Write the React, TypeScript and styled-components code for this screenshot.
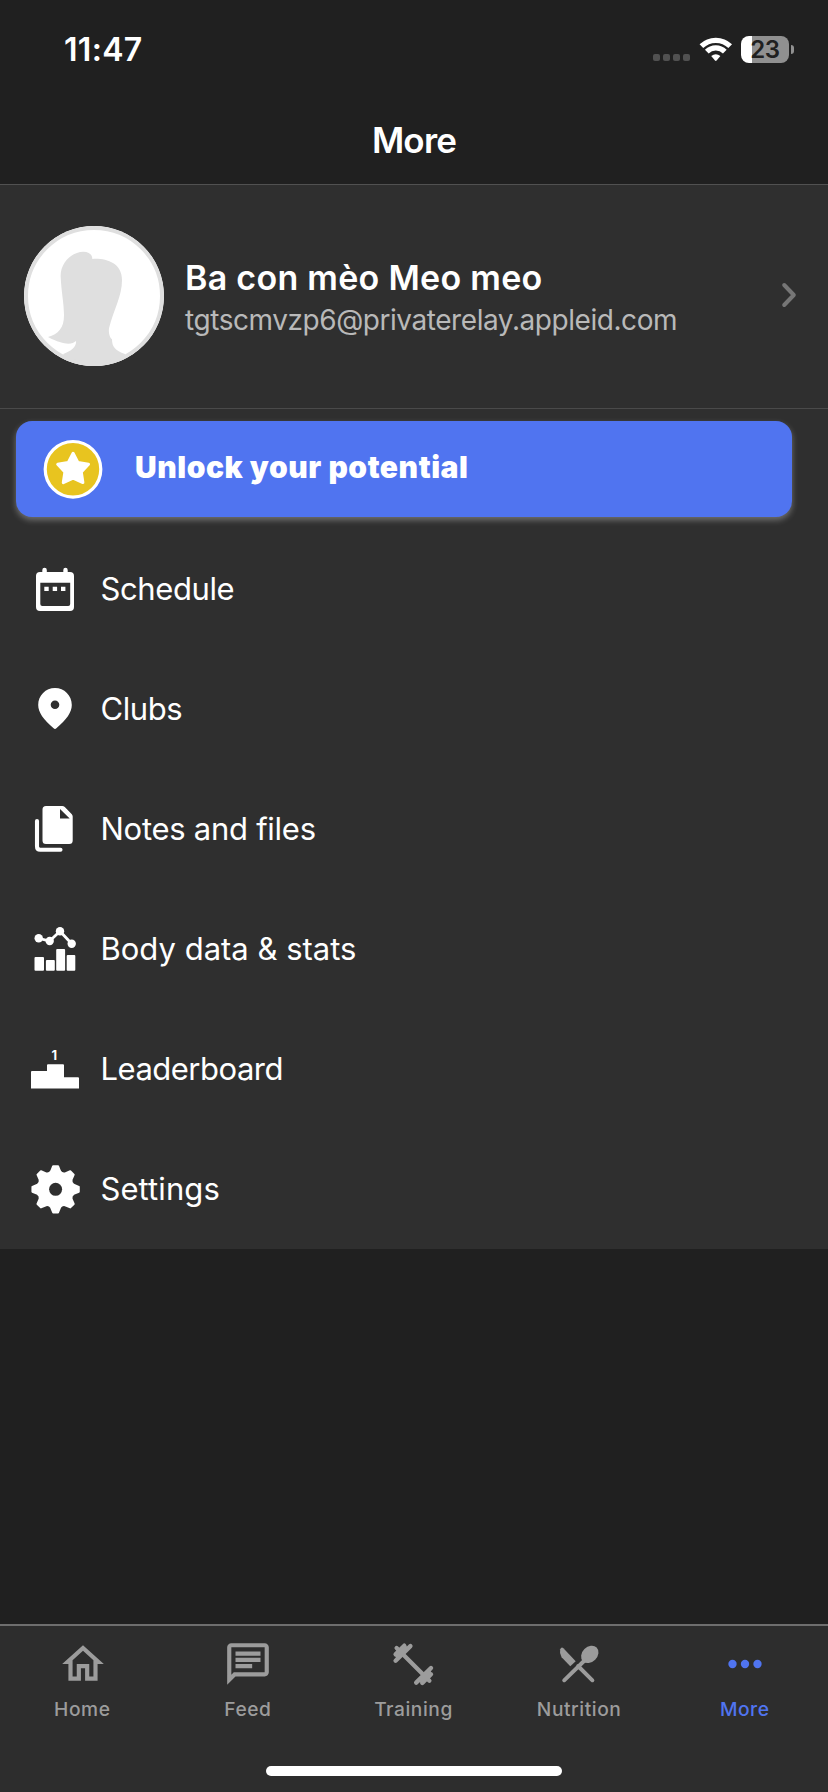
import React from "react";
import styled, { createGlobalStyle } from "styled-components";

const GlobalStyle = createGlobalStyle`
  * { box-sizing: border-box; }
  body {
    margin: 0;
    background: #202020;
    color: #fff;
    font-family: Inter, "Liberation Sans", sans-serif;
  }
`;

const Screen = styled.div`
  display: flex;
  flex-direction: column;
  width: 828px;
  height: 1792px;
  overflow: hidden;
  background: #202020;
`;

const StatusBar = styled.header`
  display: flex;
  justify-content: space-between;
  height: 96px;
  padding: 30px 34px 0 64px;
`;

const Time = styled.span`
  font-size: 32px;
  font-weight: 600;
  line-height: 40px;
  letter-spacing: 0.3px;
`;

const StatusIcons = styled.div`
  display: flex;
  align-items: flex-start;
  padding-top: 6px;
`;

const Signal = styled.div`
  display: flex;
  gap: 3px;
  margin: 18px 9px 0 0;
`;

const SignalDot = styled.i`
  width: 7px;
  height: 7px;
  border-radius: 2px;
  background: #515151;
`;

const Wifi = styled.svg`
  width: 34px;
  height: 26px;
  margin-right: 8px;
`;

const Battery = styled.div`
  display: flex;
  align-items: center;
  justify-content: center;
  width: 48px;
  height: 27px;
  border-radius: 8px;
  background: linear-gradient(to right, #fff 11px, #909090 11px);
  color: #202020;
  font-size: 24px;
  font-weight: 600;
  line-height: 27px;
  letter-spacing: -0.3px;
`;

const BatteryCap = styled.i`
  width: 3px;
  height: 9px;
  margin: 9px 0 0 2px;
  border-radius: 0 4px 4px 0;
  background: #909090;
`;

const TitleBar = styled.div`
  display: flex;
  justify-content: center;
  height: 89px;
  padding-top: 23px;
  border-bottom: 1px solid #515151;
`;

const Title = styled.h1`
  margin: 0;
  font-size: 35px;
  font-weight: 600;
  line-height: 42px;
  letter-spacing: -0.8px;
`;

const Content = styled.main`
  flex: 1;
`;

const Panel = styled.section`
  background: #2f2f2f;
`;

const Profile = styled.div`
  display: flex;
  align-items: center;
  height: 224px;
  padding: 0 30px 2px 24px;
  border-bottom: 1px solid #4a4a4a;
`;

const Avatar = styled.div`
  width: 140px;
  height: 140px;
  border-radius: 50%;
  overflow: hidden;
  background: #fff;
  svg { display: block; }
`;

const ProfileText = styled.div`
  flex: 1;
  margin-left: 21px;
  padding-top: 6px;
`;

const Name = styled.div`
  font-size: 34px;
  font-weight: 600;
  line-height: 43px;
  letter-spacing: 0.28px;
`;

const Email = styled.div`
  color: #b9b9b9;
  font-size: 28px;
  line-height: 43px;
  letter-spacing: -0.44px;
`;

const Chevron = styled.svg`
  width: 18px;
  height: 28px;
  margin-bottom: 1px;
`;

const CardWrap = styled.div`
  padding: 12px 36px 12px 16px;
`;

const UnlockCard = styled.div`
  display: flex;
  align-items: center;
  height: 96px;
  padding-left: 27px;
  border-radius: 16px;
  background: #5074f0;
  box-shadow: 0 3px 6px rgba(255, 255, 255, 0.32);
`;

const CardLabel = styled.span`
  margin: -5px 0 0 32px;
  font-size: 30px;
  font-weight: 900;
  letter-spacing: 0.55px;
`;

const MenuRow = styled.div`
  display: flex;
  align-items: center;
  height: 120px;
  padding-left: 27px;
`;

const MenuIcon = styled.svg`
  width: 56px;
  height: 56px;
  fill: #fff;
`;

const MenuLabel = styled.span<{ $spacing: number }>`
  margin-left: 17.5px;
  font-size: 31px;
  line-height: 40px;
  letter-spacing: ${(p) => p.$spacing}px;
`;

const TabBar = styled.nav`
  height: 168px;
  border-top: 2px solid #6e6e6e;
  background: #2d2d2d;
`;

const Tabs = styled.div`
  display: grid;
  grid-template-columns: repeat(5, 1fr);
  height: 140px;
`;

const Tab = styled.div<{ $active?: boolean }>`
  display: flex;
  flex-direction: column;
  align-items: center;
  padding-top: 13px;
  color: ${(p) => (p.$active ? "#5074f0" : "#9c9c9c")};
`;

const TabIcon = styled.svg`
  width: 50px;
  height: 50px;
  fill: currentColor;
`;

const TabLabel = styled.span`
  margin: 8px 1px 0 0;
  font-size: 19.2px;
  font-weight: 500;
  line-height: 24px;
  letter-spacing: 0.55px;
`;

const HomeIndicator = styled.div`
  width: 296px;
  height: 10px;
  margin: 0 auto;
  border-radius: 5px;
  background: #fff;
`;

function gearPath(cx: number, cy: number) {
  const at = (r: number, deg: number) => {
    const a = (deg * Math.PI) / 180;
    return `${(cx + r * Math.sin(a)).toFixed(2)} ${(cy - r * Math.cos(a)).toFixed(2)}`;
  };
  let d = `M${at(23.3, -6)}`;
  for (let i = 0; i < 8; i++) {
    const t = i * 45;
    d += `L${at(23.3, t + 6)}L${at(18.6, t + 14)}Q${at(16.4, t + 22.5)} ${at(18.6, t + 31)}L${at(23.3, t + 39)}`;
  }
  return d + "Z";
}

const menu: { label: string; spacing: number; icon: React.ReactNode }[] = [
  {
    label: "Schedule",
    spacing: -0.4,
    icon: (
      <path
        fillRule="evenodd"
        d="M15.3 11V9a2.2 2.2 0 0 1 4.5 0v2h16.5V9a2.2 2.2 0 0 1 4.4 0v2H43a4 4 0 0 1 4 4v31a4 4 0 0 1-4 4H13a4 4 0 0 1-4-4V15a4 4 0 0 1 4-4zM13.3 21.8V43a2 2 0 0 0 2 2h25.9a2 2 0 0 0 2-2V21.8zM17.3 25.7h4.4v4.4h-4.4zM25.7 25.7h4.4v4.4h-4.4zM34 25.7h4.4v4.4H34z"
      />
    ),
  },
  {
    label: "Clubs",
    spacing: -0.4,
    icon: (
      <path
        fillRule="evenodd"
        d="M28 7C18.7 7 11.2 14.5 11.2 24C11.2 31.5 16.5 38.5 26.6 47.2Q28 48.6 29.4 47.2C39.5 38.5 44.8 31.5 44.8 24C44.8 14.5 37.3 7 28 7ZM28 19.5a4.3 4.3 0 1 1 0 8.6a4.3 4.3 0 1 1 0-8.6Z"
      />
    ),
  },
  {
    label: "Notes and files",
    spacing: -0.27,
    icon: (
      <>
        <path
          fillRule="evenodd"
          d="M19 5h16.2q1.5 0 2.6 1.1l6.8 6.8q1.1 1.1 1.1 2.6V39.5a3.5 3.5 0 0 1-3.5 3.5H19a3.5 3.5 0 0 1-3.5-3.5V8.5A3.5 3.5 0 0 1 19 5ZM33 8v9.6h9.7Z"
        />
        <path d="M10 20V45.5q0 3.2 3.2 3.2H33.5" fill="none" stroke="#fff" strokeWidth="4.1" strokeLinecap="round" />
      </>
    ),
  },
  {
    label: "Body data & stats",
    spacing: 0,
    icon: (
      <>
        <path d="M11.7 17.3L22.7 20L33 10.3L44.7 22.7" fill="none" stroke="#fff" strokeWidth="2.8" />
        <circle cx="11.7" cy="17.3" r="4.2" />
        <circle cx="22.7" cy="20" r="4.2" />
        <circle cx="33" cy="10.3" r="4.2" />
        <circle cx="44.7" cy="22.7" r="4.2" />
        <rect x="7.5" y="36" width="9.5" height="13.8" rx="1" />
        <rect x="18.9" y="39" width="8.9" height="10.8" rx="1" />
        <rect x="29.2" y="28" width="8.9" height="21.8" rx="1" />
        <rect x="39.7" y="34" width="8.6" height="15.8" rx="1" />
      </>
    ),
  },
  {
    label: "Leaderboard",
    spacing: -0.5,
    icon: (
      <>
        <path d="M4 31q0-1 1-1H20V24.3q0-1 1-1H36q1 0 1 1V36.3H51q1 0 1 1V47.5H4Z" />
        <text x="27.2" y="19" fontSize="13" fontWeight="700" textAnchor="middle">1</text>
      </>
    ),
  },
  {
    label: "Settings",
    spacing: 0.08,
    icon: (
      <>
        <path d={gearPath(28.6, 28.3)} stroke="#fff" strokeWidth="2" strokeLinejoin="round" />
        <circle cx="28.6" cy="28.3" r="6.5" fill="#2f2f2f" />
      </>
    ),
  },
];

const tabs: { label: string; viewBox: string; active?: boolean; icon: React.ReactNode }[] = [
  {
    label: "Home",
    viewBox: "0 0 24 24",
    icon: <path d="m12 5.69 5 4.5V18h-2v-6H9v6H7v-7.81l5-4.5M12 3 2 12h3v8h6v-6h2v6h6v-8h3L12 3z" />,
  },
  {
    label: "Feed",
    viewBox: "0 0 24 24",
    icon: (
      <path
        fillRule="evenodd"
        d="M4 2C2.9 2 2 2.9 2 4V22L6 18H20C21.1 18 22 17.1 22 16V4C22 2.9 21.1 2 20 2ZM4 4H20V16H5.17L4 17.17ZM6 12h8v2H6ZM6 9h12v2H6ZM6 6h12v2H6Z"
      />
    ),
  },
  {
    label: "Training",
    viewBox: "0 0 50 50",
    icon: (
      <g fill="none" stroke="currentColor" strokeLinecap="round">
        <path d="M7.6 9L40.4 41.7" strokeWidth="4.3" />
        <path d="M6.6 21.7L21.4 7.1M6.6 15.4L15.3 6.7M42 29L27.2 43.6M42 35.3L33.3 44" strokeWidth="4.4" />
        <path d="M8.2 17.6L17 8.8M40.4 33.1L31.6 41.9" strokeWidth="3.4" />
      </g>
    ),
  },
  {
    label: "Nutrition",
    viewBox: "0 0 50 50",
    icon: (
      <>
        <path d="M8.4 9.2L20.7 22.2L15.3 27.3L6.6 18.3Q4.2 14.4 5.2 10.3Q6.4 7.3 8.4 9.2Z" />
        <ellipse cx="34.8" cy="15.4" rx="9.7" ry="7.6" transform="rotate(-45 34.8 15.4)" />
        <path d="M29 22L9.2 41.3M23 27L37.4 41.3" fill="none" stroke="currentColor" strokeWidth="3.9" strokeLinecap="round" />
      </>
    ),
  },
  {
    label: "More",
    viewBox: "0 0 24 24",
    active: true,
    icon: (
      <>
        <circle cx="6" cy="12" r="2" />
        <circle cx="12" cy="12" r="2" />
        <circle cx="18" cy="12" r="2" />
      </>
    ),
  },
];

export default function App() {
  return (
    <Screen>
      <GlobalStyle />
      <StatusBar>
        <Time>11:47</Time>
        <StatusIcons>
          <Signal>
            <SignalDot />
            <SignalDot />
            <SignalDot />
            <SignalDot />
          </Signal>
          <Wifi viewBox="0 0 34 26">
            <g fill="none" stroke="#fff" strokeWidth="5.2">
              <path d="M2.4 10.2A20.5 20.5 0 0 1 31.2 10.2" />
              <path d="M7.8 15.6A12.7 12.7 0 0 1 25.8 15.6" />
            </g>
            <path d="M12.2 20Q16.8 16.4 21.4 20L17.6 24.6Q16.8 25.4 16 24.6Z" fill="#fff" />
          </Wifi>
          <Battery>23</Battery>
          <BatteryCap />
        </StatusIcons>
      </StatusBar>
      <TitleBar>
        <Title>More</Title>
      </TitleBar>
      <Content>
        <Panel>
          <Profile>
            <Avatar>
              <svg width="140" height="140" viewBox="72 78 420 420">
                <path
                  d="M182 230C180 190 215 155 250 155C268 155 277 165 277 177C315 174 366 187 366 240C366 290 342 325 327 385C325 400 330 415 336 418C336 440 345 452 375 462V500H190V462C215 452 230 440 228 423C215 435 190 435 144 411C175 402 192 385 192 345C192 310 184 275 182 230Z"
                  fill="#dfdfdf"
                />
                <circle cx="282" cy="288" r="204" fill="none" stroke="#dfdfdf" strokeWidth="12" />
              </svg>
            </Avatar>
            <ProfileText>
              <Name>Ba con mèo Meo meo</Name>
              <Email>tgtscmvzp6@privaterelay.appleid.com</Email>
            </ProfileText>
            <Chevron viewBox="0 0 18 28">
              <path d="M4.2 4L13.8 14L4.2 24" fill="none" stroke="#767676" strokeWidth="4" strokeLinecap="round" strokeLinejoin="round" />
            </Chevron>
          </Profile>
          <CardWrap>
            <UnlockCard>
              <svg width="60" height="60" viewBox="0 0 60 60">
                <circle cx="30" cy="30.3" r="27.8" fill="#e8c41f" stroke="#fff" strokeWidth="3.2" />
                <path
                  d="M30.1 14.3L35 23.6L45.5 25.3L38.3 33.1L39.9 43.6L30.1 39.1L20.3 43.6L21.9 33.1L14.7 25.3L25.2 23.6Z"
                  fill="#fff"
                  stroke="#fff"
                  strokeWidth="3"
                  strokeLinejoin="round"
                />
              </svg>
              <CardLabel>Unlock your potential</CardLabel>
            </UnlockCard>
          </CardWrap>
          {menu.map((item) => (
            <MenuRow key={item.label}>
              <MenuIcon viewBox="0 0 56 56">{item.icon}</MenuIcon>
              <MenuLabel $spacing={item.spacing}>{item.label}</MenuLabel>
            </MenuRow>
          ))}
        </Panel>
      </Content>
      <TabBar>
        <Tabs>
          {tabs.map((tab) => (
            <Tab key={tab.label} $active={tab.active}>
              <TabIcon viewBox={tab.viewBox}>{tab.icon}</TabIcon>
              <TabLabel>{tab.label}</TabLabel>
            </Tab>
          ))}
        </Tabs>
        <HomeIndicator />
      </TabBar>
    </Screen>
  );
}
